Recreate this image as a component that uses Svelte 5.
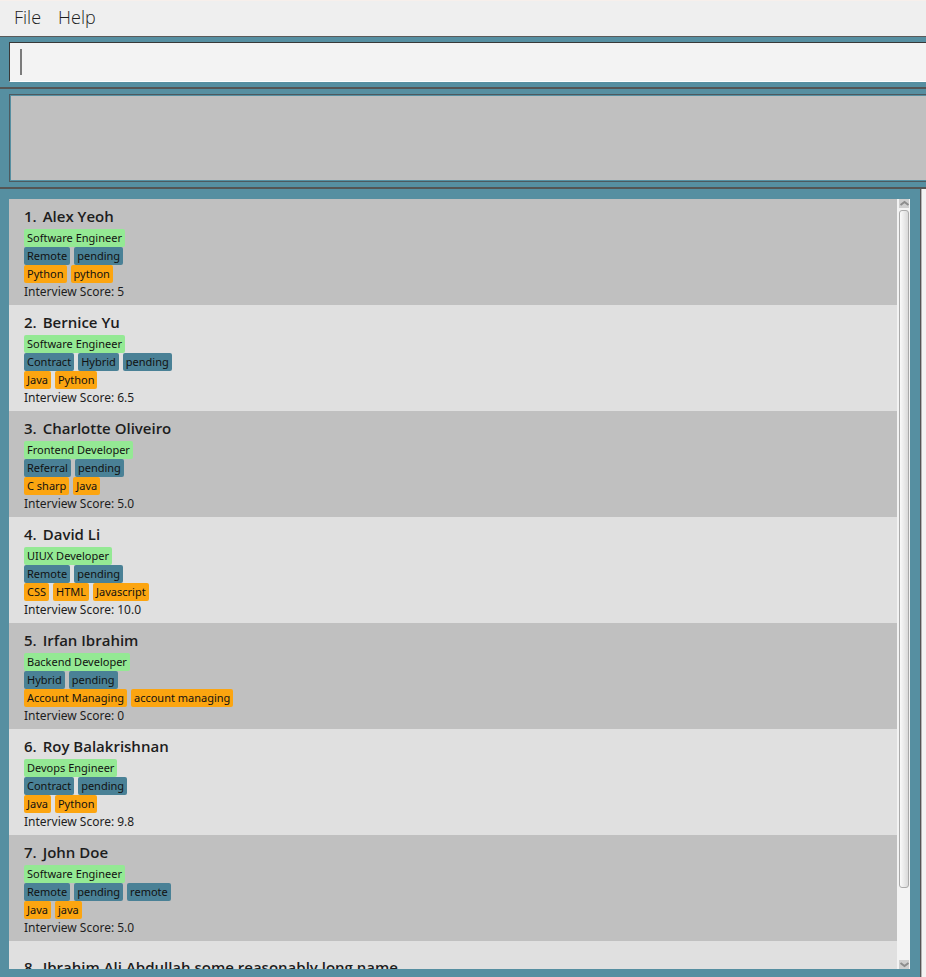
<script>
  let command = $state('');

  const candidates = [
    { name: 'Alex Yeoh', role: 'Software Engineer', labels: ['Remote', 'pending'], skills: ['Python', 'python'], score: '5' },
    { name: 'Bernice Yu', role: 'Software Engineer', labels: ['Contract', 'Hybrid', 'pending'], skills: ['Java', 'Python'], score: '6.5' },
    { name: 'Charlotte Oliveiro', role: 'Frontend Developer', labels: ['Referral', 'pending'], skills: ['C sharp', 'Java'], score: '5.0' },
    { name: 'David Li', role: 'UIUX Developer', labels: ['Remote', 'pending'], skills: ['CSS', 'HTML', 'Javascript'], score: '10.0' },
    { name: 'Irfan Ibrahim', role: 'Backend Developer', labels: ['Hybrid', 'pending'], skills: ['Account Managing', 'account managing'], score: '0' },
    { name: 'Roy Balakrishnan', role: 'Devops Engineer', labels: ['Contract', 'pending'], skills: ['Java', 'Python'], score: '9.8' },
    { name: 'John Doe', role: 'Software Engineer', labels: ['Remote', 'pending', 'remote'], skills: ['Java', 'java'], score: '5.0' },
    { name: 'Ibrahim Ali Abdullah some reasonably long name', tall: true }
  ];
</script>

<div class="app">
  <nav class="menu">
    <button type="button">File</button>
    <button type="button">Help</button>
  </nav>

  <div class="command">
    <input type="text" aria-label="Command" bind:value={command} />
    {#if command === ''}<span class="caret"></span>{/if}
  </div>

  <div class="result">
    <output class="message" aria-label="Result"></output>
  </div>

  <main class="split">
    <section class="pane">
      <ol class="list">
        {#each candidates as person, i}
          <li class="card" class:tall={person.tall}>
            <h2><span>{i + 1}.</span><span>{person.name}</span></h2>
            {#if person.role}
              <div class="tags role"><span>{person.role}</span></div>
              <div class="tags labels">
                {#each person.labels as label}<span>{label}</span>{/each}
              </div>
              <div class="tags skills">
                {#each person.skills as skill}<span>{skill}</span>{/each}
              </div>
              <p>Interview Score: {person.score}</p>
            {/if}
          </li>
        {/each}
      </ol>
      <div class="scrollbar">
        <button type="button" aria-label="Scroll up">
          <svg viewBox="0 0 11 9" width="11" height="9"><path d="M1.5 6 5.5 3 9.5 6" /></svg>
        </button>
        <div class="track"><div class="thumb"></div></div>
        <button type="button" aria-label="Scroll down">
          <svg viewBox="0 0 11 9" width="11" height="9"><path d="M1.5 3 5.5 6 9.5 3" /></svg>
        </button>
      </div>
    </section>
    <aside class="side"></aside>
  </main>
</div>

<style>
  .app {
    display: flex;
    flex-direction: column;
    height: 100vh;
    overflow: hidden;
    background: #568fa1;
    color: #1d1d1d;
    font-family: "Noto Sans", "Open Sans", sans-serif;
  }

  .menu {
    display: flex;
    align-items: flex-start;
    gap: 17px;
    flex: none;
    box-sizing: border-box;
    height: 37px;
    padding: 0 14px;
    border-top: 1px solid #f7efeb;
    border-bottom: 1px solid #5a5a5a;
    background: #efefef;
  }
  .menu button {
    padding: 0;
    border: 0;
    background: none;
    color: #1d1d1d;
    font: 300 18px/33px "Open Sans", sans-serif;
  }

  .command {
    position: relative;
    flex: none;
    padding: 5px 0 5px 9px;
    border-bottom: 2px solid #555;
  }
  .command input {
    display: block;
    box-sizing: border-box;
    width: 100%;
    height: 40px;
    padding: 0 10px;
    border: 1px solid #383838;
    border-right: 0;
    border-bottom-color: #fff;
    border-radius: 0;
    outline: 0;
    background: #f3f3f3;
    font: 18px "Open Sans", sans-serif;
  }
  .caret {
    position: absolute;
    left: 20px;
    top: 12px;
    width: 2px;
    height: 26px;
    background: #7b7b7b;
  }

  .result {
    flex: none;
    padding: 5px 0 5px 9px;
    border-bottom: 2px solid #555;
  }
  .message {
    display: block;
    box-sizing: border-box;
    height: 88px;
    border: 1px solid #4c5a60;
    border-right: 0;
    background: #c0c0c0;
    box-shadow: inset 1px 1px #568fa1, inset 0 -1px #568fa1;
  }

  .split {
    display: flex;
    flex: 1;
    min-height: 0;
  }
  .pane {
    display: flex;
    flex: 1;
    min-width: 0;
    padding: 10px 10px 8px 9px;
    border-right: 1px solid #555;
  }
  .side {
    width: 5px;
    border-left: 1px solid #b5b5b5;
    box-sizing: border-box;
    background: #f3f3f3;
  }

  .list {
    flex: 1;
    min-width: 0;
    margin: 0;
    padding: 0;
    overflow: hidden;
    list-style: none;
    background: #e0e0e0;
  }
  .card {
    padding: 5px 15px;
    background: #e0e0e0;
  }
  .card:nth-child(odd) {
    background: #c0c0c0;
  }
  .card.tall {
    padding-top: 14px;
  }
  h2 {
    display: flex;
    gap: 6px;
    margin: 0;
    font: 600 15px/25px "Open Sans", sans-serif;
  }
  .tags {
    display: flex;
    gap: 4px;
  }
  .tags span {
    padding: 0 3px;
    border-radius: 2px;
    color: #111;
    font-size: 11px;
    line-height: 18px;
  }
  .role span {
    background: #94e994;
  }
  .labels span {
    background: #4a8196;
  }
  .skills span {
    background: #fca510;
  }
  p {
    margin: 0;
    font-size: 12px;
    line-height: 17px;
  }

  .scrollbar {
    display: flex;
    flex-direction: column;
    flex: none;
    width: 11px;
    padding: 0 0 0 2px;
    background: #f3f3f3;
  }
  .scrollbar button {
    display: block;
    flex: none;
    width: 10px;
    height: 9px;
    padding: 0;
    border: 0;
    background: #cecece;
    line-height: 0;
  }
  .scrollbar path {
    fill: none;
    stroke: #8c8c8c;
    stroke-width: 2;
  }
  .track {
    display: flex;
    flex: 1;
    flex-direction: column;
    padding: 2px 0;
  }
  .track::after {
    content: "";
    flex: 7;
  }
  .thumb {
    flex: 68;
    box-sizing: border-box;
    width: 10px;
    border: 1px solid #aaa;
    border-radius: 3px;
    background: linear-gradient(90deg, #fafafa, #d9d9d9);
  }
</style>
